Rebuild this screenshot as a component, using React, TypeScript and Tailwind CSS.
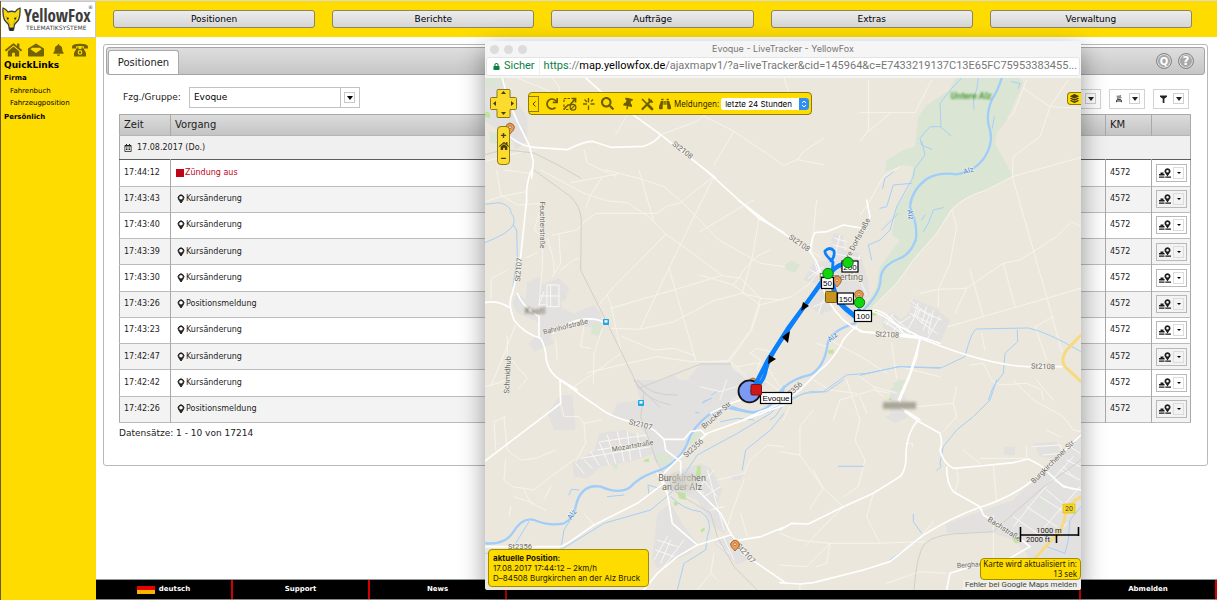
import React from "react";
import {
  FaBell,
  FaBinoculars,
  FaHome,
  FaLayerGroup,
  FaLock,
  FaRedo,
  FaRegCalendarAlt,
  FaSearch,
  FaThumbtack,
} from "react-icons/fa";

const pageFont = "font-['DejaVu_Sans',Verdana,sans-serif]";
const mapFont = "font-['Noto_Sans','Open_Sans',sans-serif]";

/* ---------- Map data: each tile is drawn at three units per pixel ---------- */

type Tile = {
  x: number;
  y: number;
  urban?: string;
  park?: string;
  grass?: string;
  rail?: string;
  river?: string;
  stream?: string;
  minor?: string;
  grid?: string;
  major?: string;
  federal?: string;
};

const tiles: Tile[] = [
  {
    x: 484, y: 38,
    urban: "M3 140L40 120L70 150L100 190L130 240L130 310L95 335L80 300L3 250Z",
    park: "M3 120H65L60 140L40 135L20 150L3 145ZM15 280L65 290V320L20 315Z",
    grass: "M3 220L18 225V240L3 237Z",
    rail: "M3 350L60 335L150 345L220 380L290 420",
    major: "M55 120L70 180L100 250L135 320L148 370L143 420M70 290Q110 325 150 328L250 335Q300 310 325 310L380 328L480 325Q520 310 530 290M305 120L350 160L530 290L695 420",
    minor: "M205 120L228 150L222 175L175 150L100 120M530 290L640 250L720 180M660 235L750 280L900 382L940 365L1020 380M750 280L690 380M430 230L395 290M900 120L935 230M300 335L310 375L395 415M5 370L120 340M1020 300L960 340L940 365",
  },
  {
    x: 484, y: 170,
    urban: "M130 335L170 320L172 345L225 325L255 355L245 390L230 395L235 415L270 430L330 405L350 430L352 470L300 470L255 455L200 500L210 520L150 545L135 520L165 490L165 460L150 450L100 430L85 400L100 365L125 390ZM465 660L570 615L600 640L650 580L740 582L745 600L850 640L830 660Z",
    park: "M325 460L357 468L345 500L320 490Z",
    rail: "M150 0L260 80Q290 110 292 150L290 300L345 410L375 470L465 655L650 582L740 582",
    stream: "M3 103L45 98Q80 105 82 130Q95 145 88 165Q75 190 3 218M88 165L98 180L100 260L87 350",
    major: "M143 0Q125 40 128 90L110 260L85 370Q70 400 90 450Q120 490 170 505Q185 530 187 570Q195 610 230 630L280 660M3 398Q40 390 75 412M100 370Q115 410 165 440L165 505M205 490Q260 450 300 447Q340 445 355 455M665 0L825 145L900 188",
    minor: "M3 95L50 80L125 65M38 0L50 75L100 105L170 100M60 0L140 10M175 100L150 180L175 200L175 290L165 405M125 263L160 248M205 195L280 180L295 160L335 130L520 130L550 108L590 98L690 18M190 205L210 275L210 310M225 190L230 280L205 320M230 300L270 270L285 265M170 0L300 70L370 93L430 98L500 145L545 192L640 260L715 317L770 325L830 385L900 390M262 38L400 12M305 115L320 75L355 20M365 0L465 25L540 50L595 97L705 210L830 280L900 290M465 0L508 150M690 20L625 150L555 295L468 478M545 193L390 350L345 405M825 145L805 260L775 370L830 383L800 480L730 575M710 317L620 345L380 415M775 370L690 392L570 455L468 478L380 475M555 295L635 570M415 500L510 540L570 535L632 557M370 375L380 400L410 540M255 660L350 595L410 550M310 608L520 560L620 575L730 575M355 475L330 550L328 640M300 465L290 530L320 535M95 465L45 590L20 650M75 560L130 625L105 655M70 560V500M215 510L220 570M20 385L22 325L70 300M740 580L800 640M800 550L830 570L820 600",
    grid: "M190 345H225V410H190ZM170 378H225M200 345V410M165 405L180 365M165 405H190",
  },
  {
    x: 700, y: 200,
    urban: "M400 100L430 105L430 150L480 160L505 245L510 290L470 300L460 360L440 350L400 290L395 330L360 345L320 310L370 260L310 240L340 190L385 180ZM545 355L570 340L600 360L620 345L640 310L650 300L720 330V430L680 415L600 400L550 385ZM0 490H95L30 540L0 560ZM570 575L610 580L630 620L570 640Z",
    park: "M255 195L275 180L300 195L285 218L262 212ZM578 552L600 540L612 570L590 580Z",
    grass: "M383 452L400 448L402 460L386 462ZM515 335L525 332V345L515 347Z",
    river: "M490 332L465 370Q395 390 383 430Q375 500 330 525Q260 540 230 590Q200 640 150 637L90 625",
    stream: "M720 505L600 500L500 520L440 525L370 575L330 575L260 600L225 650L210 660M10 605L35 595M35 585L50 575",
    major: "M330 155Q335 110 345 98L380 95L430 75L490 85L510 50L500 0M115 0L200 65L330 155Q365 200 365 250Q380 310 430 360Q460 385 490 395L660 410L720 430M470 380Q430 410 420 440Q390 490 360 510L300 570Q240 620 180 635L130 660M660 410L650 470L625 540L600 600V620L660 660M500 330Q550 340 580 370L660 410",
    minor: "M350 0L335 155L360 170M160 0L0 95M0 225L100 255L180 315L155 390L90 482M180 315L275 290L330 250L355 215M100 255L140 200L170 170L210 150M20 485L90 482L110 500L170 490L200 500L240 560M110 500L150 540L200 545L235 570M150 460L170 445L210 455M720 530L600 500M400 660L420 600L520 570L570 580M350 430L380 440M250 660L270 620M480 590L500 640M0 560L60 575L110 560M80 540L60 600M400 425L500 480L560 520",
    grid: "M405 115L440 125M400 135L440 145M395 160L480 175M420 105L400 190M450 160L430 220M480 165L460 230M330 210L370 230M325 235L370 200M345 190L365 250M340 320L390 300M355 340L370 300M480 240L500 285M550 365L600 395M570 345L620 385M600 370L630 350M620 395L655 330M640 320L700 350M630 340L690 370M655 310L640 350M680 320L665 370M700 330L685 400",
  },
  {
    x: 484, y: 380,
    urban: "M380 110L400 70L470 60L450 0L760 0L780 30L740 60L690 100L650 150L610 200L570 250L540 270L510 240L500 180L450 120L400 120ZM265 245L330 215L345 160L420 150L500 180L510 220L440 245L350 260L310 295L270 290ZM190 100L230 45L265 45L275 150L210 150ZM520 400L560 370L600 440L640 490L620 520L520 565L505 540ZM530 290L650 250L680 265L715 330L700 370L730 440L720 460L690 440L640 360L560 330ZM690 490L740 460L790 540L760 555ZM740 285L780 280L770 300L745 300Z",
    park: "M520 215L560 225L570 250L540 265L515 240ZM625 160L660 155L625 200L610 190ZM385 255L400 250L403 265L390 268Z",
    grass: "M480 240L495 235V245H480ZM640 258H650V288H635ZM580 335L605 340V360L585 355ZM568 368L578 363L583 373L573 378ZM650 450L660 442L663 450L653 458Z",
    rail: "M450 0L480 40L470 110L520 250L580 340L680 400L700 470L750 560L820 630M450 0Q480 60 560 75M460 0Q500 50 580 45M465 20L530 85",
    river: "M3 490Q60 495 85 460Q115 410 150 420Q200 440 240 430Q270 415 275 380Q290 310 350 320Q420 350 450 310Q480 285 530 270Q590 240 610 190Q625 140 680 100L740 80Q810 105 850 95Q890 80 900 20",
    stream: "M3 520L230 510L360 430L500 390L560 340L610 270L640 225L760 160L860 100L900 60M560 350Q600 390 650 395Q690 420 670 470L665 510L600 550L580 630M775 270L785 210L860 150L900 100M230 510L240 450L265 410M95 490L135 425M370 350L420 345M255 345L262 328L285 330M495 345L492 315L525 325M710 125L760 115L810 120M655 70L675 58M635 98H645",
    major: "M3 243L230 70L228 0Q260 20 290 45L370 100Q420 125 470 130L510 150L540 178L600 178L620 155L650 150L665 165M900 75L780 120L670 160L580 240L530 290L540 310L460 370L330 435L250 490L230 500L3 500M540 178L545 210L590 245L590 290L640 330L710 400L740 460L790 530L900 605M520 280L550 340L565 430L640 495M740 465L640 495L580 530L520 580L480 630M740 485L830 470L900 442M680 100L740 70L770 60",
    minor: "M60 110L70 210L110 240L155 235L215 210M3 20L40 10L65 0M65 110L30 125L35 210M230 70L240 110L285 110L300 130L350 120M300 130L305 190L275 245M65 240L60 300L85 320L150 330L200 290L270 240M120 330L140 370L185 390M90 350L150 370M80 380L75 410M640 630L680 580L690 520M780 300L750 380L730 440M700 300L780 280M900 200L850 195L800 240L780 280M790 470L770 400M700 600L680 580M200 320L180 360M330 435L300 400",
    grid: "M275 250L300 280M300 240L325 265M320 215L345 255M345 185L375 255M370 165L395 250M400 155L420 245M430 155L440 240M460 160L470 230M290 235L500 200M350 185L490 165M340 210L495 185M640 330L690 270M660 350L710 320M650 290L700 350M680 390L720 380M670 270L720 450M600 290L660 340M520 480L580 500M515 510L570 530M530 550L560 480M510 540L550 470M540 560L600 480M700 490L735 520M720 475L750 540",
  },
  {
    x: 780, y: 380,
    urban: "M500 430L600 395L700 360L760 300L830 240L900 160H903V630H760L740 520L700 480L640 460L500 460ZM315 110L370 85L385 110L345 130ZM670 200H705V225H675ZM760 190L830 185L850 240L780 230Z",
    park: "M330 30L360 0H378L355 35ZM770 360L790 355L800 370L780 375Z",
    grass: "M325 58L333 52L335 62ZM695 475L715 470L725 485L705 490Z",
    rail: "M402 630Q410 520 435 490Q470 460 560 460L640 455Q700 400 780 330L903 240",
    river: "M660 632Q760 590 903 575",
    stream: "M0 80L70 40L140 35L190 0M650 0L630 60L580 110L530 150L490 200L480 250L483 260L470 272M175 259H250M400 403V425L425 460M330 540L415 480M903 380L870 420L865 480L855 520L800 500",
    major: "M0 450L35 430L85 432L190 380L280 340L360 290Q380 270 378 220Q380 160 412 122M375 95L412 122L480 160Q490 190 480 210Q490 250 520 265L600 258L700 248L745 237L780 255L850 320L903 330M500 262Q500 310 520 335L600 380L610 405L700 460L750 500M0 608L60 612L100 608L250 570L330 545L430 465Q520 410 600 382Q690 355 760 300L903 165M355 60L383 0M620 570L680 540L750 500M500 630L510 580L620 545",
    minor: "M100 0L150 30L230 40M200 0L220 60L240 120L225 180L255 240L235 320L190 350M0 215L60 225L130 325L190 380M60 225L60 140L100 90M100 270L130 325L90 385M410 80L520 70L530 20M520 70L530 110L490 155M280 340L260 410L300 490M190 380L130 440L80 495M0 555L80 560L150 490L290 490L440 485M0 460L50 480L150 490M150 490L140 550L110 560M550 210L600 250M600 235H740V200M530 265L535 300L525 335M640 255L650 365M700 0L760 60L850 110L880 150L903 155M800 150L840 170M460 425L430 460M640 405V600M320 610L420 575L500 580M60 612V630M380 190H397V200M770 0L820 60",
    grid: "M740 380L830 440M700 410L800 480M780 350L860 400M700 440L780 340L880 230M760 480L830 400L900 320M800 500L860 430M820 300L880 330M840 270L900 300M860 240L900 260M800 330L860 380M760 200L840 195L850 220L790 225M870 200L900 220M850 260L880 290",
    federal: "M903 350Q860 375 855 410Q850 450 820 475L760 540L700 600L600 630",
  },
  {
    x: 860, y: 80,
    urban: "M65 715L100 695L140 740L180 750L200 740L150 670L165 655L190 680L230 690L270 720L240 790L180 775L110 760Z",
    park: "M285 -6H480L490 10L440 120L410 160L405 190L460 290L380 330Q310 350 270 390L230 460L160 540L110 610L40 680L10 690L50 620L60 560L120 480L95 465L110 380L150 320L160 260L130 255L75 275L80 240L130 210L165 200L175 110L200 75L270 30Z",
    grass: "M40 695L50 690V705L38 708Z",
    river: "M425 -6Q415 30 395 60Q375 110 390 150Q400 190 375 230Q345 275 290 283Q235 275 200 297Q155 330 150 380Q175 440 167 480Q150 525 115 537Q60 560 62 600Q60 640 10 690",
    stream: "M305 -6L275 25L240 70L243 140L210 140L180 175L185 195L215 208M243 142L272 167M185 185L195 225L165 265L160 290L110 380L90 450L60 480L25 495L35 540M155 310L100 315L80 380L60 385M100 275L75 295L68 325M355 -6L350 30L340 55L342 88M403 110L397 145M250 383L220 390L205 430L190 455M195 405L185 420M455 5L480 10L475 25M0 886L115 860L245 863L315 830Q335 750 350 747L505 744Q560 755 663 815M472 750L473 785L435 820L430 880L400 920L385 960M115 400L65 450",
    major: "M40 690Q80 690 130 760L170 775M0 755L180 775L260 805Q400 855 500 860H605M180 780L150 880L115 960",
    minor: "M0 98H165L215 0M25 0V150L0 185M90 100L25 155M500 0L490 25L570 80L663 85M570 80L625 0M570 82L540 170L460 230L457 290L663 232M457 290L560 650L605 815M490 25L460 100L445 115M457 290L380 330Q310 350 275 390L230 460L160 540L110 610L40 680M275 390L290 440L270 550L235 630V680M180 640L235 628L320 625L430 550L480 540L590 470L635 425L663 440M320 625L285 700M330 570L370 710M430 550L465 680M265 740L560 655L663 625M580 710L525 740L560 840M0 405L25 370L70 290L120 260M330 855L370 850L395 900L420 915L500 910L545 930L550 960M365 760L375 810M40 920L70 950M95 790L110 895M0 890L40 920L110 940",
    grid: "M75 720L130 765M100 700L80 735M120 725L100 755M155 665L200 700L245 720M180 690L170 715L230 760M210 700L190 750M240 710L200 780M140 745L150 765",
    federal: "M663 765L620 810Q600 840 615 860L663 905",
  },
];

function layer(key: keyof Tile, props: React.SVGProps<SVGPathElement>) {
  return tiles.map((t, i) =>
    t[key] ? (
      <path key={i} transform={`translate(${t.x} ${t.y}) scale(0.3333)`} d={String(t[key])} {...props} />
    ) : null,
  );
}

type Label = { t: string; x: number; y: number; r?: number; c?: string; s?: number };

const labels: Label[] = [
  { t: "St2108", x: 681, y: 152, r: 38 },
  { t: "St2108", x: 798, y: 245, r: 35 },
  { t: "St2108", x: 887, y: 337, r: 3 },
  { t: "St2108", x: 1043, y: 369, r: 2 },
  { t: "Feuchterstraße", x: 540, y: 225, r: 90, s: 7 },
  { t: "St2107", x: 521, y: 270, r: -85 },
  { t: "Bahnhofstraße", x: 566, y: 329, r: -14, s: 7 },
  { t: "Schmidhub", x: 510, y: 375, r: -87 },
  { t: "St2107", x: 640, y: 427, r: 14 },
  { t: "Mozartstraße", x: 633, y: 448, r: -10, s: 7 },
  { t: "St2356", x: 695, y: 450, r: -42 },
  { t: "St2356", x: 794, y: 393, r: -42 },
  { t: "Brucker Str", x: 718, y: 417, r: -42 },
  { t: "St2356", x: 520, y: 549 },
  { t: "St2107", x: 744, y: 555, r: 48 },
  { t: "Obere Dorfstraße", x: 857, y: 245, r: -62 },
  { t: "Burgkirchener Str.", x: 1055, y: 463, r: -45 },
  { t: "Bachstraße", x: 1003, y: 531, r: 33 },
  { t: "Bergham", x: 971, y: 567, r: -4, s: 7 },
  { t: "Alz", x: 969, y: 173, r: -15, c: "#3f87d6" },
  { t: "Alz", x: 908, y: 215, r: 82, c: "#3f87d6" },
  { t: "Alz", x: 834, y: 339, r: -40, c: "#3f87d6" },
  { t: "Alz", x: 574, y: 516, r: -55, c: "#3f87d6" },
];

function TagLabel({ x, y, w, text }: { x: number; y: number; w: number; text: string }) {
  return (
    <g className="font-['Liberation_Sans',Arial,sans-serif]">
      <rect x={x} y={y} width={w} height={11} fill="#fff" stroke="#000" strokeWidth={1.2} />
      <text x={x + w / 2} y={y + 8.5} textAnchor="middle" fontSize={8} fill="#000">{text}</text>
    </g>
  );
}

function Pin({ x, y }: { x: number; y: number }) {
  return (
    <g transform={`translate(${x} ${y})`}>
      <path d="M0 6L-3.5 2A4.3 4.3 0 1 1 3.5 2Z" fill="#f19a4a" stroke="#8a5a32" strokeWidth={0.8} />
      <circle cy={-0.8} r={1.3} fill="#fff" stroke="#8a5a32" strokeWidth={0.7} />
    </g>
  );
}

function Station({ x, y }: { x: number; y: number }) {
  return (
    <g>
      <rect x={x - 3} y={y - 3} width={6} height={6} rx={0.8} fill="#1ea7e4" />
      <rect x={x - 1.5} y={y - 1.8} width={3} height={2.4} fill="#fff" />
    </g>
  );
}

function MapCanvas() {
  const line = { fill: "none", strokeLinejoin: "round" as const, strokeLinecap: "round" as const };
  return (
    <svg
      viewBox="485 78 596 512"
      preserveAspectRatio="xMidYMid slice"
      className="block h-full w-full font-['Roboto',Arial,sans-serif]"
      role="img"
      aria-label="Karte"
    >
      <rect x={485} y={78} width={596} height={512} fill="#ebe7dc" />
      {layer("urban", { fill: "#e2e1df" })}
      {layer("park", { fill: "#dae6d3" })}
      {layer("grass", { fill: "#bfe49a" })}
      {layer("minor", { ...line, stroke: "#f6f4ec", strokeWidth: 3 })}
      {layer("grid", { ...line, stroke: "#f8f8f6", strokeWidth: 3 })}
      {layer("rail", { ...line, stroke: "#cfcfcc", strokeWidth: 3 })}
      {layer("stream", { ...line, stroke: "#a5cff8", strokeWidth: 3 })}
      {layer("river", { ...line, stroke: "#a0cdfa", strokeWidth: 7 })}
      {layer("major", { ...line, stroke: "#ffffff", strokeWidth: 5 })}
      {layer("federal", { ...line, stroke: "#f7d97f", strokeWidth: 9 })}

      <g fill="#6b6b68" stroke="#f4f1ea" strokeWidth={1.2} paintOrder="stroke" textAnchor="middle">
        {labels.map((l, i) => (
          <text
            key={i}
            fontSize={l.s ?? 7.5}
            fill={l.c}
            transform={`translate(${l.x} ${l.y}) rotate(${l.r ?? 0})`}
          >
            {l.t}
          </text>
        ))}
      </g>
      <text x={971} y={99} textAnchor="middle" fontSize={9} fontStyle="italic" fontWeight={700} fill="#4f9a3c" className="blur-[1px]">
        Untere Alz
      </text>
      <text x={535} y={314} textAnchor="middle" fontSize={9} fontWeight={700} fill="#8b8878" className="blur-[1px]">Kastl</text>
      <rect x={883} y={402} width={33} height={7} fill="#a9a597" className="blur-[1.5px]" />
      <text x={863} y={280} textAnchor="end" fontSize={9} fill="#6f6a5c" stroke="#f4f1ea" strokeWidth={1.2} paintOrder="stroke">
        Emmerting
      </text>
      <g fill="#6f6a5c" fontSize={9} textAnchor="middle">
        <text x={682} y={481}>Burgkirchen</text>
        <text x={682} y={490}>an der Alz</text>
      </g>
      <rect x={672} y={474} width={22} height={16} fill="#d0cdc3" opacity={0.7} className="blur-[2px]" />

      <Station x={606} y={322} />
      <Station x={641} y={403} />
      <Pin x={510} y={128} />
      <Pin x={735} y={545} />
      <Pin x={753} y={383} />
      <Pin x={859} y={295} />
      <Pin x={837} y={281} />

      <g {...line} stroke="#0a80fb">
        <circle cx={749.5} cy={391.3} r={11} fill="#7b9af3" stroke="#14141c" strokeWidth={1.8} />
        <path d="M752 391L768 360L789 327L828 274" strokeWidth={4.4} />
        <path d="M758 385Q764 381 766 370Q768 360 780 342L826 275" strokeWidth={3.6} />
        <path d="M832 274L833 262Q824 254 825 251Q830 246 834 251Q835 257 831 261" strokeWidth={2.8} />
        <path d="M831 272Q838 264 848 263" strokeWidth={4.6} />
        <path d="M829 273L834 290L838 301L846 309L856 317L859 311" strokeWidth={5} />
      </g>
      <g fill="#000">
        <path d="M801 311L803 302L809 306Z" />
        <path d="M790 331L782 337L788 343Z" />
        <path d="M768 364L769 355L776 359Z" />
      </g>

      <rect x={825.5} y={291.5} width={11} height={11} rx={1} fill="#c7941d" stroke="#7d5b0c" />
      <TagLabel x={842} y={261} w={16} text="200" />
      <TagLabel x={821.5} y={277.5} w={12} text="50" />
      <TagLabel x={837.5} y={293} w={16} text="150" />
      <TagLabel x={854.5} y={310.5} w={17} text="100" />
      <TagLabel x={760.5} y={392.5} w={31} text="Evoque" />
      <g fill="#12d512" stroke="#0b7a0b" strokeWidth={1}>
        <circle cx={828} cy={273.5} r={5.2} />
        <circle cx={848} cy={262.5} r={5.2} />
        <circle cx={859.5} cy={302.5} r={5.2} />
      </g>
      <rect x={751} y={384.5} width={10.5} height={10.5} rx={1} fill="#cf1717" stroke="#8c0d0d" />

      <rect x={1063} y={504} width={12} height={9} fill="#f8d81c" stroke="#d8b400" strokeWidth={0.6} />
      <text x={1069} y={511.3} textAnchor="middle" fontSize={7} fill="#444">20</text>
      <path d="M1020.5 527V542M1020.5 535H1079M1078.5 527V536M1056.5 535V543" fill="none" stroke="#000" strokeWidth={1.6} />
      <text x={1049} y={533} textAnchor="middle" fontSize={7.5} fill="#222">1000 m</text>
      <text x={1038} y={542} textAnchor="middle" fontSize={7.5} fill="#222">2000 ft</text>
    </svg>
  );
}

/* ---------- Small drawings ---------- */

function FoxHead() {
  return (
    <svg viewBox="0 0 19 25" className="h-[25px] w-[19px] shrink-0" aria-hidden="true">
      <path d="M1 1Q4 2 6 5Q9.500 3.500 13 5Q15 2 18 1Q18.500 8 16.500 13L12.500 17.500L11.500 23H7.500L6.500 17.500L2.500 13Q.5 8 1 1Z" fill="#f6d90c" stroke="#3d3d3d" strokeWidth="1.300" strokeLinejoin="round" />
      <path d="M4 9L6 13L8.500 18.500M15 9L13 13L10.500 18.500" fill="none" stroke="#b89a00" strokeWidth=".6" />
      <circle cx="5.800" cy="11.500" r="1" fill="#222" />
      <circle cx="13.200" cy="11.500" r="1" fill="#222" />
      <path d="M7 20.500H12L11 24H8Z" fill="#2c2c2c" />
    </svg>
  );
}

function OpenMail() {
  return (
    <svg viewBox="0 0 16 14" className="h-[14px] w-4" fill="currentColor" aria-hidden="true">
      <path d="M0 5.500L8 .5L16 5.500V12.500Q16 13.500 15 13.500H1Q0 13.500 0 12.500ZM2.500 6.200L8 10L13.500 6.200L12 4.800H4Z" fillRule="evenodd" />
    </svg>
  );
}

function DeskPhone() {
  return (
    <svg viewBox="0 0 16 14" className="h-[14px] w-4" fill="currentColor" aria-hidden="true">
      <path d="M0 4Q0 .8 8 .8T16 4V5.500H12V3.500Q8 2.600 4 3.500V5.500H0Z" />
      <path d="M5 4.500H6.500V6H9.500V4.500H11L14 10V13.500H2V10ZM8 7A2.400 2.400 0 1 0 8 11.800A2.400 2.400 0 1 0 8 7Z" fillRule="evenodd" />
      <circle cx="8" cy="9.400" r="1.200" />
    </svg>
  );
}

function AreaBan() {
  return (
    <svg viewBox="0 0 14 14" className="size-[14px]" fill="none" stroke="currentColor" strokeWidth="1.200" aria-hidden="true">
      <path d="M1 5V1.500H7.500M1 7.500V12.500H5.500" strokeDasharray="2.500 1" />
      <path d="M1.500 11.500L5 8H7L11.500 2.500M8.500 1.500H12.500V5.500" strokeWidth="1.700" />
      <circle cx="10" cy="10.200" r="2.900" />
      <path d="M8 12.200L12 8.200" />
    </svg>
  );
}

function Crosshair() {
  return (
    <svg viewBox="0 0 14 14" className="size-[14px]" fill="none" stroke="currentColor" strokeWidth="1.300" aria-hidden="true">
      <path d="M6.500 1V5.500M6.500 8.500V13M1 7H5M8.500 7H12.500M9 4.500L11 2.500M2.500 2.500L5 5" />
    </svg>
  );
}

function CrossedTools() {
  return (
    <svg viewBox="0 0 14 14" className="size-[14px]" fill="none" stroke="currentColor" aria-hidden="true">
      <path d="M2.500 12L11 3.500" strokeWidth="2.200" strokeLinecap="round" />
      <path d="M9 1.500Q9 5 12.800 5" strokeWidth="1.800" />
      <path d="M2 2L7 7" strokeWidth="1.600" />
      <path d="M8.500 8.500L12 12" strokeWidth="2.800" strokeLinecap="round" />
    </svg>
  );
}

function DownArrow() {
  return (
    <svg viewBox="0 0 6 4" className="h-1 w-1.5" aria-hidden="true">
      <path d="M0 0H6L3 4Z" fill="currentColor" />
    </svg>
  );
}

function CarExchange() {
  return (
    <svg viewBox="0 0 8 10" className="h-2 w-2" fill="none" stroke="currentColor" aria-hidden="true">
      <path d="M1 1.500H6M5 .5L6.500 1.500M2 3.500H7M3 4.500L1.500 3.500" strokeWidth=".9" />
      <path d="M1 9V6.800L2 5.500H6L7 6.800V9M1 7.500H7" strokeWidth="1.200" />
    </svg>
  );
}

function Funnel() {
  return (
    <svg viewBox="0 0 7 8" className="h-2 w-[7px]" fill="currentColor" aria-hidden="true">
      <path d="M0 .5H7V1.800L4.400 3.800V8H2.700V3.800L0 1.800Z" />
    </svg>
  );
}

function PlaceIcon() {
  return (
    <svg viewBox="0 0 12 10" className="h-2.5 w-3" fill="currentColor" aria-hidden="true">
      <path d="M1.500 4.500H4.500V6H5.500V7.500H0V6H1.500ZM0 8.500H5.500V9.800H0ZM6.300 8.500H12V9.800H6.300Z" />
      <path d="M8.500 8.500L6.200 5A2.900 2.900 0 1 1 10.800 5ZM8.500 2A1.300 1.300 0 1 0 8.500 4.600A1.300 1.300 0 1 0 8.500 2Z" fillRule="evenodd" />
    </svg>
  );
}

function RowPin() {
  return (
    <svg viewBox="0 0 8 10" className="h-2.5 w-2 shrink-0" aria-hidden="true">
      <path d="M4 9L1.500 5.300A2.900 2.900 0 1 1 6.500 5.300Z" fill="#222" stroke="#222" strokeWidth="1" strokeLinejoin="round" />
      <circle cx="4" cy="3.700" r="1.800" fill="#fff" />
    </svg>
  );
}

function Flag() {
  return (
    <span className="flex h-[9px] w-[18px] flex-col" aria-hidden="true">
      <span className="flex-1 bg-black" />
      <span className="h-1 bg-[#e90000]" />
      <span className="h-1 bg-[#f8b500]" />
    </span>
  );
}

/* ---------- Portal page ---------- */

const navItems = ["Positionen", "Berichte", "Aufträge", "Extras", "Verwaltung"];

const rows = [
  { time: "17:44:12", event: "Zündung aus", alert: true },
  { time: "17:43:43", event: "Kursänderung" },
  { time: "17:43:40", event: "Kursänderung" },
  { time: "17:43:39", event: "Kursänderung" },
  { time: "17:43:30", event: "Kursänderung" },
  { time: "17:43:26", event: "Positionsmeldung" },
  { time: "17:43:23", event: "Kursänderung" },
  { time: "17:42:47", event: "Kursänderung" },
  { time: "17:42:42", event: "Kursänderung" },
  { time: "17:42:26", event: "Positionsmeldung" },
];

function Sidebar() {
  return (
    <aside className="flex w-24 shrink-0 flex-col border-l border-[#6b5a1c] bg-[#ffdc00]">
      <div className="relative flex h-[37px] items-center border border-l-0 border-[#c9c9c9] bg-white pl-px">
        <FoxHead />
        <div className="flex flex-col pl-[3px] text-[#3d3d3d]">
          <span className="font-['Liberation_Sans_Narrow','Open_Sans_Condensed','Roboto_Condensed','Liberation_Sans',sans-serif] text-[17px] font-bold leading-[17px]">
            YellowFox
          </span>
          <span className="pl-0.5 text-[6px] leading-[8px]">TELEMATIKSYSTEME</span>
        </div>
        <span className="absolute top-[3px] right-0.5 text-[5px] leading-[5px] text-[#3d3d3d]">®</span>
      </div>
      <nav className="flex h-5 items-end gap-1.5 pl-1 text-[#736300]" aria-label="Schnellzugriff">
        <a href="#home" aria-label="Startseite"><FaHome className="h-4 w-[17px]" /></a>
        <a href="#mail" aria-label="Nachrichten" className="pb-px"><OpenMail /></a>
        <a href="#alarm" aria-label="Alarme" className="flex w-4 justify-center pb-0.5"><FaBell className="h-3 w-[13px]" /></a>
        <a href="#phone" aria-label="Telefon" className="pb-px"><DeskPhone /></a>
      </nav>
      <div className="flex flex-col pl-[3px] text-[7px] leading-3 text-black">
        <h2 className="text-[9px] font-bold leading-[14px]">QuickLinks</h2>
        <h3 className="font-bold leading-[13px]">Firma</h3>
        <a href="#fahrtenbuch" className="pl-[6px]">Fahrenbuch</a>
        <a href="#fahrzeugposition" className="pl-[6px]">Fahrzeugposition</a>
        <h3 className="font-bold leading-4">Persönlich</h3>
      </div>
    </aside>
  );
}

function ToolButton({ label, children }: { label: string; children?: React.ReactNode }) {
  return (
    <button type="button" aria-label={label} className="flex h-5 w-9 items-center justify-end gap-1.5 border border-[#d2d2d2] bg-white pr-1 text-[#222]">
      {children}
      <span className="flex h-[11px] w-[11px] items-center justify-center border border-[#cfcfcf]"><DownArrow /></span>
    </button>
  );
}

function PositionTable() {
  const head = "border-r border-[#a9a9a9] pl-1 text-left text-[10px] font-normal last:border-r-0";
  const cell = "border-r border-[#a9a9a9] pl-1 last:border-r-0";
  return (
    <table className="h-[309px] w-full border-collapse border border-[#a9a9a9] text-[8px] leading-3 text-[#1c1c1c]">
      <thead>
        <tr className="h-[21px] border-b border-[#b5b5b5] bg-linear-to-b from-[#dcdcdc] to-[#c4c4c4]">
          <th className={`${head} w-[51px]`}>Zeit</th>
          <th className={head}>Vorgang</th>
          <th className={`${head} w-[46px]`}>KM</th>
          <th className={`${head} w-[39px]`} aria-label="Aktionen" />
        </tr>
      </thead>
      <tbody>
        <tr className="h-6 border-b border-[#5e5e5e] bg-[#f0f0f0]">
          <td colSpan={4} className="pl-1">
            <span className="flex items-center gap-[5px]"><FaRegCalendarAlt className="h-2 w-2" />17.08.2017 (Do.)</span>
          </td>
        </tr>
        {rows.map((r) => (
          <tr key={r.time} className="h-[26px] border-b border-[#bcbcbc] even:bg-white odd:bg-[#f3f3f3]">
            <td className={cell}>{r.time}</td>
            <td className={cell}>
              <span className={r.alert ? "flex items-center gap-px pl-px text-[#c00418]" : "flex items-center gap-px pl-0.5"}>
                {r.alert ? <span className="size-2 bg-[#c00418]" /> : <RowPin />}
                {r.event}
              </span>
            </td>
            <td className={cell}>4572</td>
            <td className={cell}>
              <button type="button" aria-label={`Aktionen ${r.time}`} className="flex h-[18px] w-[31px] items-center justify-between border border-[#b9b9b9] px-0.5">
                <PlaceIcon />
                <span className="flex h-3 w-[11px] items-center justify-center border border-[#dcdcdc]">
                  <svg viewBox="0 0 4 2" className="h-0.5 w-1" aria-hidden="true"><path d="M0 0H4L2 2Z" /></svg>
                </span>
              </button>
            </td>
          </tr>
        ))}
      </tbody>
    </table>
  );
}

function PortalPage() {
  return (
    <div className="flex min-w-0 flex-1 flex-col">
      <header className="h-9 bg-[#ffdc00] pt-[9px] pr-[25px] pl-[17px]">
        <nav className="grid grid-cols-5 gap-[17px]" aria-label="Hauptmenü">
          {navItems.map((n) => (
            <button key={n} type="button" className="h-[18px] rounded-[3px] border border-[#8d8560] bg-linear-to-b from-[#ececec] to-[#d6d6d6] text-[9px] leading-3 text-black">
              {n}
            </button>
          ))}
        </nav>
      </header>

      <main className="flex-1 pt-[7px] pr-[9px] pl-[7px]">
        <section className="h-[422px] rounded-[3px] border border-[#b9b9b9] p-0.5">
          <div className="flex h-7 items-end justify-between rounded-[3px] border border-[#a5a5a5] bg-linear-to-b from-[#dedede] to-[#c6c6c6] pl-px">
            <button type="button" className="h-6 w-[71px] rounded-t-[3px] border border-b-0 border-[#aaa] bg-white text-[10px] text-[#222]">Positionen</button>
            <div className="flex gap-1.5 self-center pr-2.5 text-white">
              <button type="button" aria-label="Suche" className="flex size-4 items-center justify-center rounded-full border border-[#888] bg-[#a8a8a8] text-[10px] font-bold ring-1 ring-white/60 ring-inset">Q</button>
              <button type="button" aria-label="Hilfe" className="flex size-4 items-center justify-center rounded-full border border-[#888] bg-[#a8a8a8] text-[12px] font-bold ring-1 ring-white/60 ring-inset">?</button>
            </div>
          </div>

          <div className="pr-[14px] pl-[13px]">
            <div className="flex h-[39px] items-center justify-between pt-1.5">
              <div className="flex items-center gap-2 pl-1">
                <label htmlFor="gruppe" className="text-[9px] text-[#222]">Fzg./Gruppe:</label>
                <div className="flex h-[21px] border border-[#c3c3c3]">
                  <input id="gruppe" defaultValue="Evoque" className="w-[151px] border-r border-[#c3c3c3] px-1 text-[9px] text-black outline-none" />
                  <button type="button" aria-label="Auswahl öffnen" className="flex w-[18px] items-center justify-center">
                    <span className="flex size-[11px] items-center justify-center border border-[#c9c9c9]"><DownArrow /></span>
                  </button>
                </div>
              </div>
              <div className="flex gap-2 pt-0.5 pr-0.5">
                <ToolButton label="Ansicht" />
                <ToolButton label="Fahrzeugwechsel"><CarExchange /></ToolButton>
                <ToolButton label="Filter"><Funnel /></ToolButton>
              </div>
            </div>
            <PositionTable />
            <p className="pt-1 text-[9px] leading-3 text-[#222]">Datensätze: 1 - 10 von 17214</p>
          </div>
        </section>
      </main>

      <footer className="flex h-[21px] border-t border-b border-t-[#8f9a94] border-b-[#8a8a8a] bg-black text-[7px] font-bold text-white">
        <a href="#sprache" className="flex w-[137px] items-center justify-center gap-1 border-r-2 border-[#d20000]"><Flag />deutsch</a>
        <a href="#support" className="flex w-[137px] items-center justify-center border-r-2 border-[#d20000]">Support</a>
        <a href="#news" className="flex w-[137px] items-center justify-center border-r-2 border-[#d20000]">News</a>
        <span className="flex-1" />
        <a href="#abmelden" className="flex w-[138px] items-center justify-center border-x-2 border-[#d20000]">Abmelden</a>
      </footer>
    </div>
  );
}

/* ---------- Live tracker window ---------- */

const panButtons = [
  { label: "Norden", cls: "col-start-2 row-start-1", d: "M0 3H5L2.500 0Z" },
  { label: "Westen", cls: "col-start-1 row-start-2", d: "M4 0V5L1 2.500Z" },
  { label: "Osten", cls: "col-start-3 row-start-2", d: "M1 0V5L4 2.500Z" },
  { label: "Süden", cls: "col-start-2 row-start-3", d: "M0 1H5L2.500 4Z" },
];

function MapControls() {
  return (
    <>
      <div className="absolute top-[11px] left-[5px] flex flex-col items-center gap-2 text-[#4a3f00]">
        <div className="relative grid h-[29px] w-[27px] grid-cols-3 grid-rows-3">
          <svg viewBox="0 0 27 29" className="absolute inset-0 h-full w-full" aria-hidden="true">
            <path d="M8 .5H19Q20 .5 20 1.500V8.500H25.500Q26.500 8.500 26.500 9.500V19.500Q26.500 20.500 25.500 20.500H20V27.500Q20 28.500 19 28.500H8Q7 28.500 7 27.500V20.500H1.500Q.5 20.500 .5 19.500V9.500Q.5 8.500 1.500 8.500H7V1.500Q7 .5 8 .5Z" fill="#fbdc2e" stroke="#8d7a10" />
          </svg>
          {panButtons.map((b) => (
            <button key={b.label} type="button" aria-label={b.label} className={`relative flex items-center justify-center ${b.cls}`}>
              <svg viewBox="0 0 5 5" className="size-[5px]" aria-hidden="true"><path d={b.d} fill="currentColor" /></svg>
            </button>
          ))}
        </div>
        <div className="flex h-[39px] w-[13px] flex-col items-center justify-between rounded-sm border border-[#8d7a10] bg-[#fbdc2e] py-0.5 text-[10px] font-bold leading-[10px]">
          <button type="button" aria-label="Vergrößern">+</button>
          <button type="button" aria-label="Ausgangsansicht"><FaHome className="size-[10px]" /></button>
          <button type="button" aria-label="Verkleinern">−</button>
        </div>
      </div>

      <div className="absolute top-[14px] left-[43px] flex h-[23px] items-center rounded-sm border border-[#8d7a10] bg-[#ffdc00] pr-0.5 text-[#6b5c00]">
        <button type="button" aria-label="Leiste einklappen" className="flex h-4 w-2.5 items-center justify-center border border-l-0 border-[#8d7a10]">
          <svg viewBox="0 0 4 6" className="h-1.5 w-1" fill="none" stroke="#4a3f00" aria-hidden="true"><path d="M3.500 .5L1 3L3.500 5.500" /></svg>
        </button>
        <div className="flex items-center gap-[5px] pr-[3px] pl-[7px]">
          <button type="button" aria-label="Aktualisieren"><FaRedo className="size-3" /></button>
          <button type="button" aria-label="Ausschnitt sperren"><AreaBan /></button>
          <button type="button" aria-label="Zentrieren"><Crosshair /></button>
          <button type="button" aria-label="Suchen" className="pr-1"><FaSearch className="size-[13px]" /></button>
          <button type="button" aria-label="Anheften"><FaThumbtack className="h-3 w-2.5 rotate-12" /></button>
          <button type="button" aria-label="Einstellungen" className="pl-0.5"><CrossedTools /></button>
          <button type="button" aria-label="Fernglas"><FaBinoculars className="size-3" /></button>
        </div>
        <label htmlFor="meldungen" className={`${mapFont} pr-0.5 text-[8px] text-[#2b2500]`}>Meldungen:</label>
        <div className="flex h-3 overflow-hidden rounded-[3px] bg-white">
          <select id="meldungen" className="w-[78px] appearance-none bg-white pl-1 font-['Inter',sans-serif] text-[8px] leading-3 text-black outline-none">
            <option>letzte 24 Stunden</option>
          </select>
          <span className="flex w-[10px] items-center justify-center bg-[#2e8ff7]">
            <svg viewBox="0 0 6 8" className="h-2 w-1.5" fill="none" stroke="#fff" aria-hidden="true"><path d="M1 3L3 1L5 3M1 5L3 7L5 5" /></svg>
          </span>
        </div>
      </div>

      <button type="button" aria-label="Ebenen" className="absolute top-[14px] right-0 flex h-[13px] w-[14px] items-center justify-center rounded-l-sm border border-r-0 border-[#8d7a10] bg-[#ffdc00] text-[#4a3f00]">
        <FaLayerGroup className="size-[9px]" />
      </button>

      <div className="absolute bottom-[3px] left-[3px] min-w-[161px] rounded-sm border border-[#a18b00] bg-[#ffdc00] px-1 py-[3px] font-['Inter',sans-serif] text-[8px] leading-[10px] text-[#1c1800]">
        <p className="font-bold">aktuelle Position:</p>
        <p>17.08.2017 17:44:12 – 2km/h</p>
        <p>D–84508 Burgkirchen an der Alz Bruck</p>
      </div>

      <div className={`${mapFont} absolute right-0 bottom-0 flex flex-col items-end text-[8px] leading-[10px] text-[#1c1800]`}>
        <p className="rounded-sm border border-[#a18b00] bg-[#ffdc00] pr-[3px] pl-0.5 text-right whitespace-nowrap">Karte wird aktualisiert in:<br />13 sek</p>
        <a href="#fehler" className="bg-[#f3f1ec]/80 pr-1 pl-0.5 font-['Roboto',sans-serif] text-[#444]">Fehler bei Google Maps melden</a>
      </div>
    </>
  );
}

function TrackerWindow() {
  return (
    <section
      aria-label="LiveTracker"
      className="absolute top-10 left-[485px] flex h-[549px] w-[596px] flex-col overflow-hidden rounded-[3px] bg-[#f5f5f5] font-['Inter',sans-serif] shadow-[0_8px_26px_rgba(0,0,0,0.4)]"
    >
      <div className="grid h-4 grid-cols-[1fr_auto_1fr] items-center text-[9px] text-[#777]">
        <div className="flex gap-[5px] pl-[5px]">
          <span className="size-[9px] rounded-full bg-[#dcdcdc]" />
          <span className="size-[9px] rounded-full bg-[#dcdcdc]" />
          <span className="size-[9px] rounded-full bg-[#dcdcdc]" />
        </div>
        <h1>Evoque - LiveTracker - YellowFox</h1>
      </div>
      <div className="mx-px mb-0.5 flex h-[19px] items-center rounded-[3px] border border-[#e4e4e4] bg-white font-['Roboto',sans-serif] text-[11px] whitespace-nowrap text-[#777]">
        <FaLock className="ml-1.5 size-[7px] text-[#0b8043]" />
        <span className="pl-1 text-[#0b8043]">Sicher</span>
        <span className="ml-1 min-w-0 flex-1 border-l border-[#eee] pl-1">
          <span className="text-[#0b8043]">https</span>://<span className="text-black">map.yellowfox.de</span>/ajaxmapv1/?a=liveTracker&amp;cid=145964&amp;c=E7433219137C13E65FC75953383455...
        </span>
      </div>
      <div className="relative min-h-0 flex-1">
        <MapCanvas />
        <MapControls />
      </div>
    </section>
  );
}

export default function App() {
  return (
    <div className={`${pageFont} relative flex min-h-screen overflow-hidden border-t border-[#d8d8d8] bg-white`}>
      <Sidebar />
      <PortalPage />
      <TrackerWindow />
    </div>
  );
}
